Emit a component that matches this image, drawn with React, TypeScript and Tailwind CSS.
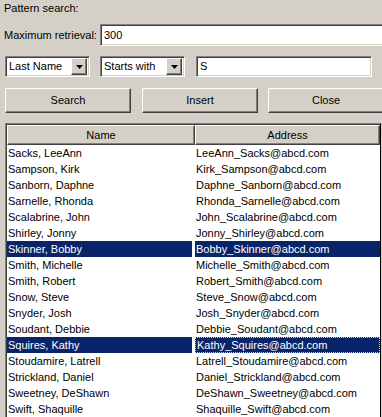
import React from 'react'

const rows = [
  ['Sacks, LeeAnn', 'LeeAnn_Sacks@abcd.com'],
  ['Sampson, Kirk', 'Kirk_Sampson@abcd.com'],
  ['Sanborn, Daphne', 'Daphne_Sanborn@abcd.com'],
  ['Sarnelle, Rhonda', 'Rhonda_Sarnelle@abcd.com'],
  ['Scalabrine, John', 'John_Scalabrine@abcd.com'],
  ['Shirley, Jonny', 'Jonny_Shirley@abcd.com'],
  ['Skinner, Bobby', 'Bobby_Skinner@abcd.com'],
  ['Smith, Michelle', 'Michelle_Smith@abcd.com'],
  ['Smith, Robert', 'Robert_Smith@abcd.com'],
  ['Snow, Steve', 'Steve_Snow@abcd.com'],
  ['Snyder, Josh', 'Josh_Snyder@abcd.com'],
  ['Soudant, Debbie', 'Debbie_Soudant@abcd.com'],
  ['Squires, Kathy', 'Kathy_Squires@abcd.com'],
  ['Stoudamire, Latrell', 'Latrell_Stoudamire@abcd.com'],
  ['Strickland, Daniel', 'Daniel_Strickland@abcd.com'],
  ['Sweetney, DeShawn', 'DeShawn_Sweetney@abcd.com'],
  ['Swift, Shaquille', 'Shaquille_Swift@abcd.com'],
]

const selected = [6, 12]

const sunken =
  'border border-t-[#808080] border-l-[#808080] border-b-white border-r-white shadow-[inset_1px_1px_0_#404040,inset_-1px_-1px_0_#d4d0c8]'
const raised =
  'border border-t-white border-l-white border-b-[#404040] border-r-[#404040] shadow-[inset_-1px_-1px_0_#808080] bg-[#d4d0c8]'

function Select({ value }: { value: string }) {
  return (
    <div className={`w-[85px] h-[21px] bg-white flex items-center p-[2px] shrink-0 ${sunken}`}>
      <span className="flex-1 pl-[1px] leading-none whitespace-nowrap">{value}</span>
      <div className={`w-[16px] h-[17px] flex items-center justify-center shrink-0 ${raised}`}>
        <svg width="7" height="4" viewBox="0 0 7 4">
          <path d="M0 0h7L3.5 4z" fill="#000" />
        </svg>
      </div>
    </div>
  )
}

function Button({ label, width }: { label: string; width: string }) {
  return (
    <div className={`${width} h-[25px] flex items-center justify-center shrink-0 ${raised}`}>
      {label}
    </div>
  )
}

export default function App() {
  return (
    <div
      className="w-[382px] h-[417px] bg-[#d4d0c8] overflow-hidden text-[11px] text-black flex flex-col"
      style={{ fontFamily: '"Liberation Sans", Arial, sans-serif' }}
    >
      <div className="h-[17px] flex items-center pl-[4px] shrink-0">Pattern search:</div>

      <div className="mt-[7px] h-[22px] flex items-center shrink-0">
        <span className="w-[100px] pl-[4px] shrink-0 whitespace-nowrap">Maximum retrieval:</span>
        <div className={`w-[290px] h-[22px] bg-white flex items-center pl-[3px] shrink-0 ${sunken}`}>
          300
        </div>
      </div>

      <div className="mt-[10px] h-[21px] flex items-center pl-[5px] shrink-0">
        <Select value="Last Name" />
        <div className="ml-[10px] shrink-0">
          <Select value="Starts with" />
        </div>
        <div className={`ml-[11px] w-[176px] h-[21px] bg-white flex items-center pl-[3px] shrink-0 ${sunken}`}>
          S
        </div>
      </div>

      <div className="mt-[11px] h-[25px] flex pl-[5px] shrink-0">
        <Button label="Search" width="w-[126px]" />
        <div className="ml-[11px] shrink-0">
          <Button label="Insert" width="w-[116px]" />
        </div>
        <div className="ml-[10px] shrink-0">
          <Button label="Close" width="w-[116px]" />
        </div>
      </div>

      <div className="mt-[10px] ml-[5px] w-[376px] flex-1 bg-white border-t border-l border-[#808080] border-r border-r-black shadow-[inset_1px_1px_0_#404040] pt-[1px] pl-[1px] overflow-hidden">
        <div className="flex h-[20px]">
          <div className={`w-[188px] flex items-center justify-center ${raised}`}>Name</div>
          <div className={`flex-1 flex items-center justify-center ${raised}`}>Address</div>
        </div>
        {rows.map(([name, addr], i) => {
          const sel = selected.includes(i)
          return (
            <div key={name} className="flex h-[16px] leading-[16px]">
              <div className="w-[188px] pr-[3px]">
                <div className={`pl-[1px] h-[16px] ${sel ? 'bg-[#0a246a] text-white' : ''}`}>{name}</div>
              </div>
              <div className="flex-1">
                <div
                  className={`pl-[1px] h-[16px] ${sel ? 'bg-[#0a246a] text-white' : ''} ${
                    i === 12 ? 'border border-dotted border-[#c8c8d8] leading-[14px]' : ''
                  }`}
                >
                  {addr}
                </div>
              </div>
            </div>
          )
        })}
      </div>
    </div>
  )
}
